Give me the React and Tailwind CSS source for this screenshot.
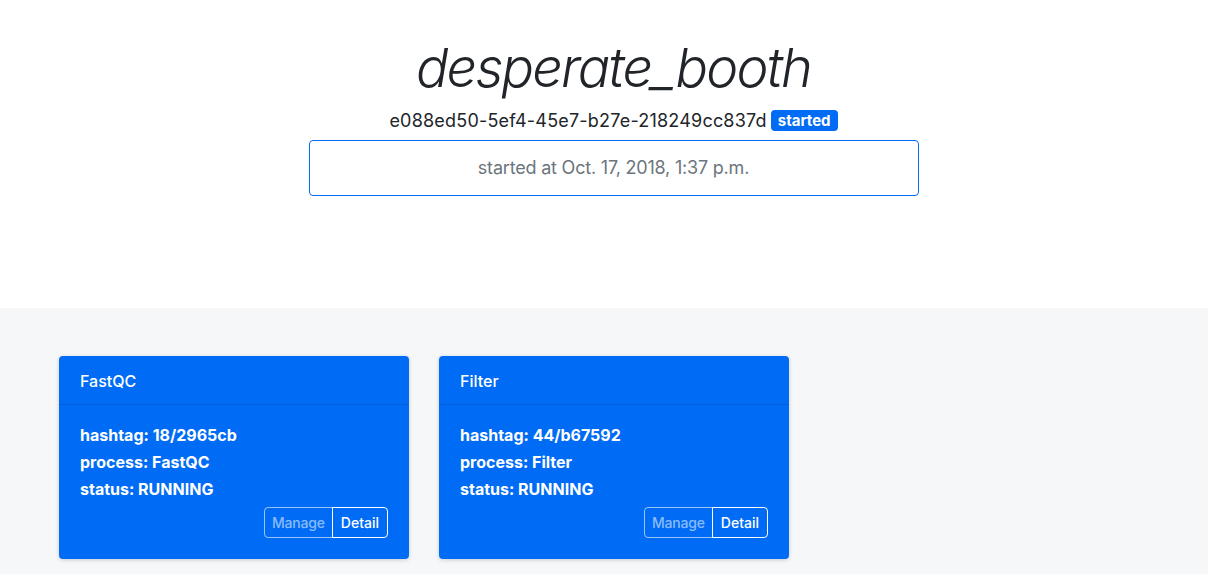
export default function App() {
  const cards = [
    { name: "FastQC", hash: "18/2965cb" },
    { name: "Filter", hash: "44/b67592" },
  ];
  return (
    <div className="min-h-[574px] bg-white text-[#212529]" style={{ fontFamily: "Inter, 'Noto Sans', sans-serif" }}>
      <div className="h-[308px] flex flex-col items-center pt-[36px] pl-[19px]">
        <h1 className="text-[54px] font-light italic leading-[1.2] tracking-[-1.8px]">desperate_booth</h1>
        <div className="mt-[6px] flex items-center text-[18px] leading-[27px] tracking-[0.2px]">
          <span>e088ed50-5ef4-45e7-b27e-218249cc837d</span>
          <span className="ml-[4px] rounded-[4px] bg-[#006cf5] px-[7px] text-[15px] font-bold leading-[21px] text-white tracking-normal">started</span>
        </div>
        <div className="mt-[6px] flex h-[56px] w-[610px] items-center justify-center rounded-[4px] border border-[#006cf5] text-[18px] text-[#6c757d] tracking-[-0.2px]">
          started at Oct. 17, 2018, 1:37 p.m.
        </div>
      </div>
      <div className="min-h-[266px] bg-[#f5f7f9] px-[59px] pt-[48px] pb-[16px]">
        <div className="flex gap-[30px]">
          {cards.map((c) => (
            <div key={c.name} className="w-[350px] rounded-[4px] bg-[#006cf5] text-white shadow-[0_1px_4px_rgba(0,0,0,0.18)]">
              <div className="border-b border-[rgba(0,0,0,0.125)] px-[21px] pt-[13px] pb-[11px] text-[16px] font-medium leading-[24px]">{c.name}</div>
              <div className="px-[21px] pt-[17px] pb-[21px]">
                <div className="text-[16px] font-bold leading-[27px]">
                  <div>hashtag: {c.hash}</div>
                  <div>process: {c.name}</div>
                  <div>status: RUNNING</div>
                </div>
                <div className="mt-[4px] flex justify-end">
                  <div className="flex h-[31px] text-[14px] font-medium">
                    <button className="rounded-l-[4px] border border-[rgba(255,255,255,0.6)] px-[7px] text-[rgba(255,255,255,0.55)] tracking-[-0.2px]">Manage</button>
                    <button className="-ml-px rounded-r-[4px] border border-white px-[8px] text-white">Detail</button>
                  </div>
                </div>
              </div>
            </div>
          ))}
        </div>
      </div>
    </div>
  );
}
